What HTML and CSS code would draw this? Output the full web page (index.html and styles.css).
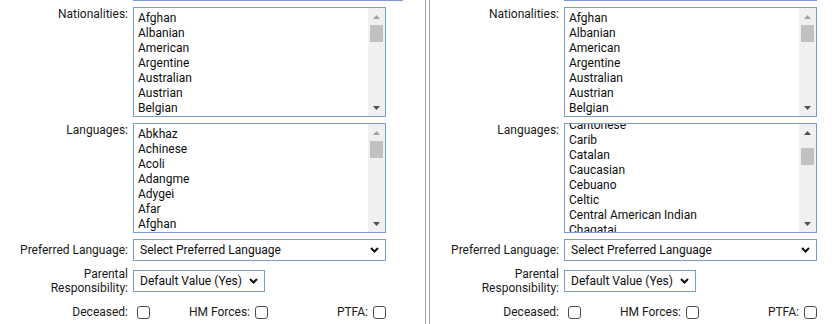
FILE: index.html
```html
<!DOCTYPE html>
<html lang="en">
<head>
<meta charset="utf-8">
<title>Person details</title>
<link rel="stylesheet" href="styles.css">
</head>
<body>
<div class="page">
  <section class="panel">
    <div class="prev-field prev-wide"></div>

    <div class="row row-top">
      <label class="lbl">Nationalities:</label>
      <div class="listbox">
        <div class="options">
          <div class="opts-inner">
            <div class="opt">Afghan</div>
            <div class="opt">Albanian</div>
            <div class="opt">American</div>
            <div class="opt">Argentine</div>
            <div class="opt">Australian</div>
            <div class="opt">Austrian</div>
            <div class="opt">Belgian</div>
          </div>
        </div>
        <div class="scrollbar">
          <span class="arrow"><svg width="7" height="4" viewBox="0 0 7 4"><path class="tri-off" d="M0 4L3.5 0L7 4Z"/></svg></span>
          <span class="track"><span class="thumb" style="margin-top:0px"></span></span>
          <span class="arrow"><svg width="7" height="4" viewBox="0 0 7 4"><path class="tri-on" d="M0 0L7 0L3.5 4Z"/></svg></span>
        </div>
      </div>
    </div>

    <div class="row row-top">
      <label class="lbl">Languages:</label>
      <div class="listbox">
        <div class="options">
          <div class="opts-inner">
            <div class="opt">Abkhaz</div>
            <div class="opt">Achinese</div>
            <div class="opt">Acoli</div>
            <div class="opt">Adangme</div>
            <div class="opt">Adygei</div>
            <div class="opt">Afar</div>
            <div class="opt">Afghan</div>
          </div>
        </div>
        <div class="scrollbar">
          <span class="arrow"><svg width="7" height="4" viewBox="0 0 7 4"><path class="tri-off" d="M0 4L3.5 0L7 4Z"/></svg></span>
          <span class="track"><span class="thumb" style="margin-top:0px"></span></span>
          <span class="arrow"><svg width="7" height="4" viewBox="0 0 7 4"><path class="tri-on" d="M0 0L7 0L3.5 4Z"/></svg></span>
        </div>
      </div>
    </div>

    <div class="row row-mid">
      <label class="lbl">Preferred Language:</label>
      <div class="select select-wide">
        <span class="select-text">Select Preferred Language</span>
        <svg class="chev" width="9" height="6" viewBox="0 0 9 6"><path d="M1 1L4.5 4.5L8 1"/></svg>
      </div>
    </div>

    <div class="row row-mid row-parental">
      <label class="lbl lbl-two">Parental<br>Responsibility:</label>
      <div class="select select-narrow">
        <span class="select-text">Default Value (Yes)</span>
        <svg class="chev" width="9" height="6" viewBox="0 0 9 6"><path d="M1 1L4.5 4.5L8 1"/></svg>
      </div>
    </div>

    <div class="row row-mid row-checks">
      <label class="lbl">Deceased:</label>
      <div class="checks">
        <span class="cb cb-first"></span>
        <span class="check-group"><span class="lbl">HM Forces:</span><span class="cb"></span></span>
        <span class="check-group"><span class="lbl">PTFA:</span><span class="cb"></span></span>
      </div>
    </div>
  </section>

  <div class="divider"></div>

  <section class="panel panel-right">
    <div class="prev-field"></div>

    <div class="row row-top">
      <label class="lbl">Nationalities:</label>
      <div class="listbox">
        <div class="options">
          <div class="opts-inner">
            <div class="opt">Afghan</div>
            <div class="opt">Albanian</div>
            <div class="opt">American</div>
            <div class="opt">Argentine</div>
            <div class="opt">Australian</div>
            <div class="opt">Austrian</div>
            <div class="opt">Belgian</div>
          </div>
        </div>
        <div class="scrollbar">
          <span class="arrow"><svg width="7" height="4" viewBox="0 0 7 4"><path class="tri-off" d="M0 4L3.5 0L7 4Z"/></svg></span>
          <span class="track"><span class="thumb" style="margin-top:0px"></span></span>
          <span class="arrow"><svg width="7" height="4" viewBox="0 0 7 4"><path class="tri-on" d="M0 0L7 0L3.5 4Z"/></svg></span>
        </div>
      </div>
    </div>

    <div class="row row-top">
      <label class="lbl">Languages:</label>
      <div class="listbox">
        <div class="options">
          <div class="opts-inner" style="margin-top:-9px">
            <div class="opt">Cantonese</div>
            <div class="opt">Carib</div>
            <div class="opt">Catalan</div>
            <div class="opt">Caucasian</div>
            <div class="opt">Cebuano</div>
            <div class="opt">Celtic</div>
            <div class="opt">Central American Indian</div>
            <div class="opt">Chagatai</div>
          </div>
        </div>
        <div class="scrollbar">
          <span class="arrow"><svg width="7" height="4" viewBox="0 0 7 4"><path class="tri-on" d="M0 4L3.5 0L7 4Z"/></svg></span>
          <span class="track"><span class="thumb" style="margin-top:7px"></span></span>
          <span class="arrow"><svg width="7" height="4" viewBox="0 0 7 4"><path class="tri-on" d="M0 0L7 0L3.5 4Z"/></svg></span>
        </div>
      </div>
    </div>

    <div class="row row-mid">
      <label class="lbl">Preferred Language:</label>
      <div class="select select-wide">
        <span class="select-text">Select Preferred Language</span>
        <svg class="chev" width="9" height="6" viewBox="0 0 9 6"><path d="M1 1L4.5 4.5L8 1"/></svg>
      </div>
    </div>

    <div class="row row-mid row-parental">
      <label class="lbl lbl-two">Parental<br>Responsibility:</label>
      <div class="select select-narrow">
        <span class="select-text">Default Value (Yes)</span>
        <svg class="chev" width="9" height="6" viewBox="0 0 9 6"><path d="M1 1L4.5 4.5L8 1"/></svg>
      </div>
    </div>

    <div class="row row-mid row-checks">
      <label class="lbl">Deceased:</label>
      <div class="checks">
        <span class="cb cb-first"></span>
        <span class="check-group"><span class="lbl">HM Forces:</span><span class="cb"></span></span>
        <span class="check-group"><span class="lbl">PTFA:</span><span class="cb"></span></span>
      </div>
    </div>
  </section>
</div>
</body>
</html>
```

FILE: styles.css
```css
* { box-sizing: border-box; }

html, body {
  margin: 0;
  padding: 0;
  background: #ffffff;
}

body {
  font-family: Roboto, "Liberation Sans", sans-serif;
  font-size: 12px;
  line-height: 15px;
  color: #1a1a1a;
  overflow: hidden;
}

.page {
  display: flex;
  width: 840px;
  height: 324px;
}

.panel {
  width: 425px;
  display: flex;
  flex-direction: column;
}

.panel-right {
  width: 410px;
  padding-left: 1px;
}

.divider {
  width: 5px;
  border-left: 1px solid #a3a3a3;
  border-right: 1px solid #a3a3a3;
}

.prev-field {
  height: 1px;
  margin-left: 133px;
  width: 253px;
  background: #7a9bcf;
}

.prev-wide {
  width: 270px;
}

.row {
  display: grid;
  grid-template-columns: 128px 253px;
  column-gap: 5px;
  margin-top: 6px;
}

.row-top {
  align-items: start;
}

.row-mid {
  align-items: center;
}

.lbl {
  text-align: right;
  color: #1a1a1a;
  white-space: nowrap;
}

.lbl-two {
  line-height: 14px;
}

/* list boxes */
.listbox {
  display: flex;
  height: 110px;
  border: 1px solid #7a9bcf;
  background: #ffffff;
}

.options {
  flex: 1;
  overflow: hidden;
  padding: 3px 0 0 4px;
}

.opt {
  height: 15px;
  line-height: 15px;
  color: #0d0d0d;
  white-space: nowrap;
}

.scrollbar {
  width: 17px;
  display: flex;
  flex-direction: column;
  background: #f0f0f0;
}

.arrow {
  height: 17px;
  display: flex;
  align-items: center;
  justify-content: center;
}

.arrow svg { display: block; }

.tri-off { fill: #a3a3a3; }
.tri-on { fill: #505050; }

.track {
  flex: 1;
  display: flex;
  flex-direction: column;
  padding: 0 2px;
}

.thumb {
  display: block;
  height: 17px;
  background: #c1c1c1;
}

/* selects */
.select {
  height: 22px;
  border: 1px solid #7a9bcf;
  display: flex;
  align-items: center;
  justify-content: space-between;
  padding: 0 6px;
  color: #0d0d0d;
  background: #ffffff;
}

.select-narrow {
  width: 132px;
}

.select-text {
  white-space: nowrap;
}

.chev {
  display: block;
  fill: none;
  stroke: #111111;
  stroke-width: 2;
}

/* checkboxes */
.row-checks {
  height: 22px;
}

.checks {
  display: grid;
  grid-template-columns: 17px 118px 118px;
  align-items: center;
}

.check-group {
  display: flex;
  justify-content: flex-end;
  align-items: center;
  gap: 5px;
}

.cb {
  display: block;
  width: 13px;
  height: 13px;
  border: 1px solid #4f4f4f;
  border-radius: 3px;
  background: #ffffff;
}

.cb-first {
  margin-left: 4px;
}
```
